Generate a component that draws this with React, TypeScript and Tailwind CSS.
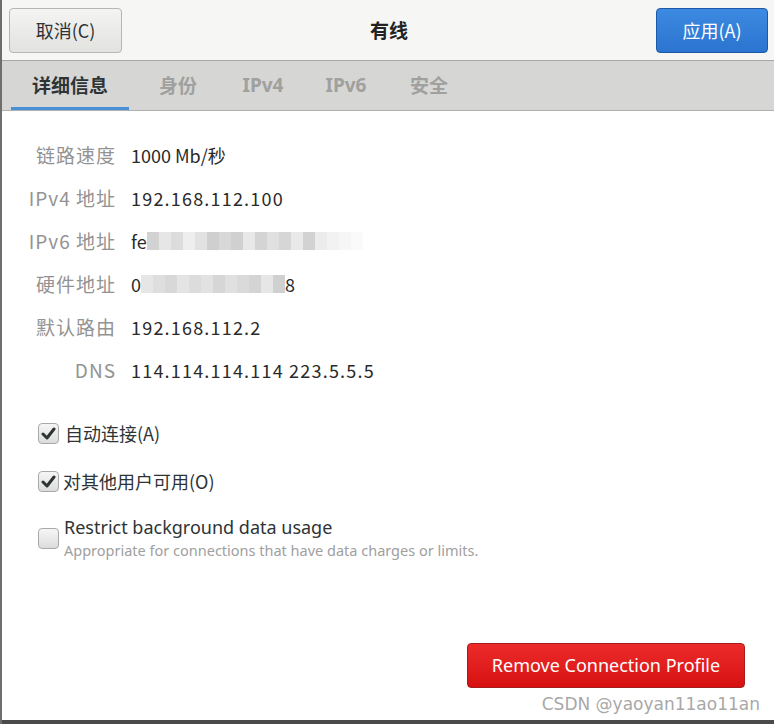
import React from 'react';

const cjk = { fontFamily: '"Noto Sans CJK SC", "Noto Sans", sans-serif' };
const latin = { fontFamily: '"Noto Sans", "Noto Sans CJK SC", sans-serif' };

function Check({ checked }: { checked?: boolean }) {
  return (
    <div className="w-[21px] h-[21px] shrink-0 rounded-[4px] border border-[#a9a9a9] bg-gradient-to-b from-[#f6f6f6] to-[#dcdcdc] flex items-center justify-center">
      {checked && (
        <svg width="15" height="13" viewBox="0 0 15 13">
          <path d="M2 7 L6 11 L13 2" fill="none" stroke="#2e3436" strokeWidth="3" strokeLinecap="round" strokeLinejoin="round" />
        </svg>
      )}
    </div>
  );
}

function Blur({ shades }: { shades: string[] }) {
  return (
    <div className="flex h-[18px] items-stretch">
      {shades.map((c, i) => (
        <div key={i} className="w-[12px]" style={{ background: c }} />
      ))}
    </div>
  );
}

const rows = [
  { label: '链路速度', value: '1000 Mb/秒' },
  { label: 'IPv4 地址', value: '192.168.112.100', ip: true },
  { label: 'IPv6 地址', value: null, kind: 'v6' },
  { label: '硬件地址', value: null, kind: 'hw' },
  { label: '默认路由', value: '192.168.112.2', ip: true },
  { label: 'DNS', value: '114.114.114.114 223.5.5.5', ip: true },
];

export default function App() {
  return (
    <div className="w-[774px] h-[724px] bg-white border-l-2 border-[#6e6e6e] flex flex-col relative overflow-hidden" style={cjk}>
      {/* header */}
      <div className="h-[61px] shrink-0 bg-[#f6f6f5] border-b border-[#a8a8a8] flex items-center justify-between pl-[7px] pr-[6px]">
        <button className="w-[113px] h-[45px] rounded-[4px] border border-[#b6b6b3] bg-gradient-to-b from-[#f4f4f3] to-[#e2e2e0] text-[18px] text-[#2e3436]">
          取消(C)
        </button>
        <div className="text-[19px] font-bold text-[#222]">有线</div>
        <button className="w-[112px] h-[45px] rounded-[4px] border border-[#1c5aa8] bg-gradient-to-b from-[#3d8ae2] to-[#2b74cf] text-[18px] text-white">
          应用(A)
        </button>
      </div>

      {/* tabs */}
      <div className="h-[50px] shrink-0 bg-[#d6d6d4] border-b border-[#b0b0ae] flex items-stretch pl-[9px] text-[19px]">
        <div className="w-[118px] flex items-center justify-center font-bold text-[#2e3436] border-b-[3px] border-[#4a90d9] pt-[3px]">详细信息</div>
        <div className="w-[98px] flex items-center justify-center font-bold text-[#a0a09e]">身份</div>
        <div className="w-[72px] flex items-center justify-center font-bold text-[#a0a09e]" style={latin}>IPv4</div>
        <div className="w-[94px] flex items-center justify-center font-bold text-[#a0a09e]" style={latin}>IPv6</div>
        <div className="w-[72px] flex items-center justify-center font-bold text-[#a0a09e]">安全</div>
      </div>

      {/* details */}
      <div className="flex flex-col gap-[17px] pt-[31px] text-[18px]">
        {rows.map((r) => (
          <div key={r.label} className="flex items-center h-[26px]">
            <div className="w-[114px] text-right text-[#939393] shrink-0 text-[19px] tracking-[1px]">{r.label}</div>
            <div className={`pl-[15px] text-[#2a2a2a] flex items-center ${r.ip ? 'tracking-[1.2px]' : ''}`}>
              {r.value}
              {r.kind === 'v6' && (
                <>
                  <span>fe</span>
                  <Blur shades={['#d2d2d2', '#e6e6e6', '#dcdcdc', '#eeeeee', '#e2e2e2', '#cfcfcf', '#d8d8d8', '#d0d0d0', '#e8e8e8', '#d4d4d4', '#e0e0e0', '#d6d6d6', '#e9e9e9', '#d2d2d2', '#ececec', '#f2f2f2', '#f6f6f6', '#fafafa']} />
                </>
              )}
              {r.kind === 'hw' && (
                <>
                  <span>0</span>
                  <Blur shades={['#e6e6e6', '#dedede', '#d8d8d8', '#e4e4e4', '#dcdcdc', '#e2e2e2', '#d6d6d6', '#e0e0e0', '#dadada', '#d4d4d4', '#e6e6e6', '#d0d0d0']} />
                  <span>8</span>
                </>
              )}
            </div>
          </div>
        ))}
      </div>

      {/* checkboxes */}
      <div className="flex flex-col pl-[36px] pt-[38px] text-[18px] text-[#2e3436]">
        <div className="flex items-center gap-[6px] h-[24px]">
          <Check checked />
          <span>自动连接(A)</span>
        </div>
        <div className="flex items-center gap-[4px] h-[24px] mt-[24px]">
          <Check checked />
          <span>对其他用户可用(O)</span>
        </div>
        <div className="flex items-center gap-[5px] mt-[22px]">
          <Check />
          <div className="flex flex-col" style={latin}>
            <span className="text-[18px] leading-[24px] text-[#2e3436]">Restrict background data usage</span>
            <span className="text-[14.5px] leading-[22px] text-[#a0a0a0]">Appropriate for connections that have data charges or limits.</span>
          </div>
        </div>
      </div>

      {/* bottom */}
      <div className="flex-1" />
      <div className="flex justify-end pr-[29px] pb-[36px]">
        <button className="w-[278px] h-[45px] rounded-[4px] border border-[#a51d1d] bg-gradient-to-b from-[#ed2a2a] to-[#d70f0f] text-[18px] text-white" style={latin}>
          Remove Connection Profile
        </button>
      </div>
      <div className="absolute left-0 right-0 bottom-0 h-[4px] bg-[#4a4a4a]" />
      <div className="absolute right-[14px] bottom-[7px] text-[17px] text-[#a8a8a8]" style={{ fontFamily: '"DejaVu Sans", sans-serif' }}>
        CSDN @yaoyan11ao11an
      </div>
    </div>
  );
}
